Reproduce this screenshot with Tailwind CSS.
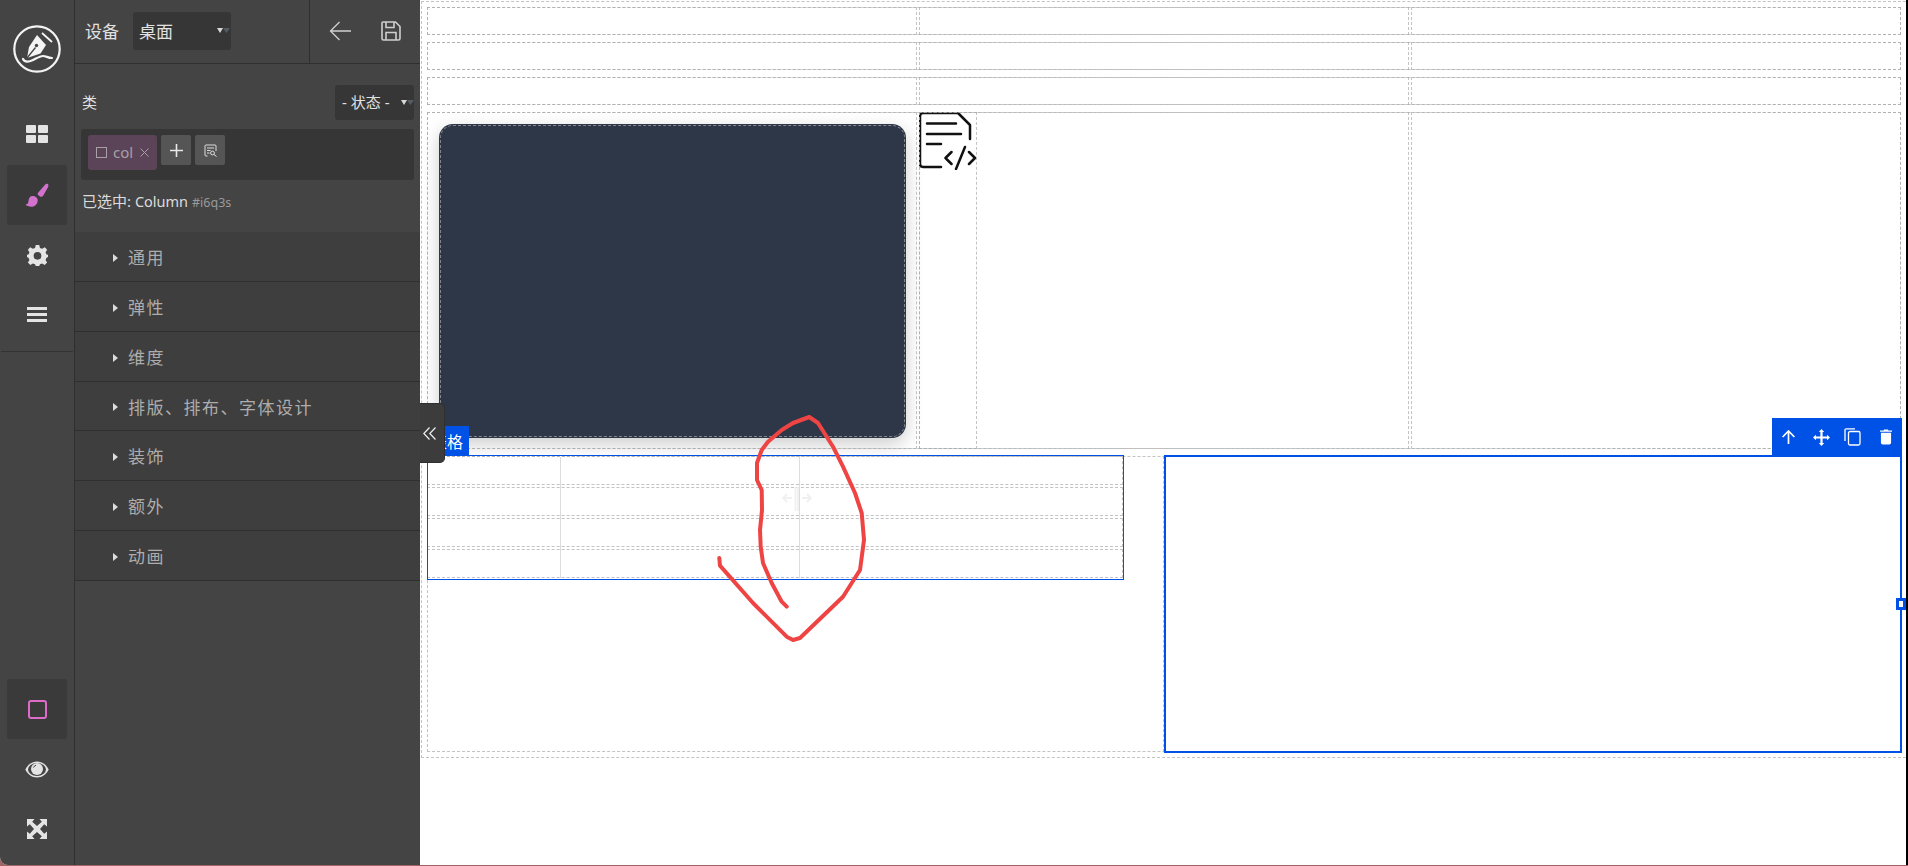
<!DOCTYPE html>
<html lang="zh">
<head>
<meta charset="utf-8">
<title>Editor</title>
<script src="https://cdn.jsdelivr.net/npm/@tailwindcss/browser@4"></script>
</head>
<body class="m-0 h-[866px] overflow-hidden bg-[#a06464] font-['Noto_Sans','Noto_Sans_CJK_SC',sans-serif]">
<div class="flex h-[865px] w-[1908px] overflow-hidden rounded-bl-lg bg-white">

  <!-- icon rail -->
  <aside class="flex w-[75px] shrink-0 flex-col border-r border-[#2f2f2f] bg-[#444444] text-[#e4e4e4]">
    <div class="flex h-[97px] items-center justify-center pt-[1px]">
      <svg class="h-[48px] w-[48px]" viewBox="0 0 48 48" fill="none">
        <circle cx="24" cy="24" r="22.7" stroke="#f4f4f4" stroke-width="2.2"/>
        <path d="M29 8 L39 17" stroke="#f4f4f4" stroke-width="1.8"/>
        <path d="M24 10 L33 20 L27.5 28.5 L14 33 L16 22 Z" fill="#f4f4f4"/>
        <path d="M14 33 L22.5 22.5" stroke="#444444" stroke-width="1.3"/>
        <circle cx="23.5" cy="20.5" r="1.7" fill="#444444"/>
        <path d="M10 34 C12 38 16 37 20 35 C24 33 27 31 30 31 C33 31 35 33 39 33" stroke="#f4f4f4" stroke-width="2.2" stroke-linecap="round"/>
      </svg>
    </div>
    <div class="flex h-[68px] items-center justify-center pt-[6px]">
      <svg class="h-[18px] w-[22px]" viewBox="0 0 22 18" fill="#e4e4e4"><rect width="10" height="8" rx="1"/><rect x="12" width="10" height="8" rx="1"/><rect y="10" width="10" height="8" rx="1"/><rect x="12" y="10" width="10" height="8" rx="1"/></svg>
    </div>
    <div class="mx-[7px] flex h-[60px] items-center justify-center rounded-[3px] bg-[#3a3a3a]">
      <svg class="h-[24px] w-[24px]" viewBox="0 0 24 24" fill="#d272cc"><path d="M22.5 .8 C23.6 1.4 23.6 3 23 4.2 L18 13 C17.4 14 16 14 15 13.4 L13.4 12.3 C12.6 11.7 12.4 10.6 13.1 9.8 L20 1.8 C20.8 .9 21.7 .4 22.5 .8 Z"/><path d="M7 13 C9.6 12.6 12 14 12.6 16.2 C13.2 19 11.6 22.4 8.4 23.4 C5.6 24.2 2.4 23.6 .4 21.6 C2.4 21.2 3.2 20.2 3.4 18.4 C3.6 15.6 4.8 13.4 7 13 Z"/></svg>
    </div>
    <div class="flex h-[60px] items-center justify-center">
      <svg class="h-[21px] w-[21px]" viewBox="0 0 24 24" fill="#e4e4e4" fill-rule="evenodd"><path d="M10 0 H14 L14.8 3.3 L17.4 4.4 L20.3 2.6 L23 5.4 L21.2 8.3 L22.3 10.8 L24 11.2 V13.8 L22.3 14.6 L21.2 17 L23 20 L20.2 22.8 L17.3 21 L14.8 22.1 L14 24 H10 L9.2 22.1 L6.7 21 L3.8 22.8 L1 20 L2.8 17 L1.7 14.6 L0 13.8 V11.2 L1.7 10.8 L2.8 8.3 L1 5.4 L3.7 2.6 L6.6 4.4 L9.2 3.3 Z M12 8 A4.4 4.4 0 1 0 12 16.8 A4.4 4.4 0 1 0 12 8 Z"/></svg>
    </div>
    <div class="flex h-[58px] items-center justify-center">
      <div class="flex w-[20px] flex-col gap-[3px]"><div class="h-[3px] bg-[#e4e4e4]"></div><div class="h-[3px] bg-[#e4e4e4]"></div><div class="h-[3px] bg-[#e4e4e4]"></div></div>
    </div>
    <div class="h-[8px]"></div>
    <div class="mx-[1px] h-px bg-[#333333]"></div>
    <div class="flex-1"></div>
    <div class="mx-[7px] flex h-[60px] items-center justify-center rounded-[3px] bg-[#3a3a3a]">
      <div class="h-[19px] w-[19px] rounded-[3px] border-2 border-[#dc6cc8]"></div>
    </div>
    <div class="flex h-[60px] items-center justify-center">
      <svg class="h-[17px] w-[24px]" viewBox="0 0 24 17"><path d="M12 .5 C6.6 .5 2.6 4 .3 8.5 C2.6 13 6.6 16.5 12 16.5 C17.4 16.5 21.4 13 23.7 8.5 C21.4 4 17.4 .5 12 .5 Z" fill="#e4e4e4"/><ellipse cx="12" cy="8.5" rx="9" ry="6.4" fill="#444444"/><circle cx="12" cy="8" r="6" fill="#e4e4e4"/><path d="M8.5 6.5 Q9.3 4.6 11 4.2" stroke="#444444" fill="none"/></svg>
    </div>
    <div class="flex h-[60px] items-center justify-center">
      <svg class="h-[20px] w-[20px]" viewBox="0 0 20 20" fill="#e4e4e4"><path d="M0 0 H7.5 L5.2 2.8 L10 7 L14.8 2.8 L12.5 0 H20 V7.5 L17.2 5.2 L13 10 L17.2 14.8 L20 12.5 V20 H12.5 L14.8 17.2 L10 13 L5.2 17.2 L7.5 20 H0 V12.5 L2.8 14.8 L7 10 L2.8 5.2 L0 7.5 Z"/></svg>
    </div>
    <div class="h-[6px]"></div>
  </aside>

  <!-- side panel -->
  <section class="flex w-[345px] shrink-0 flex-col bg-[#444444] text-[#e2e2e2]">
    <header class="flex h-[64px] shrink-0 border-b border-[#2f2f2f]">
      <div class="flex w-[234px] items-center pb-[1px] pl-[10px]">
        <span class="text-[17px] leading-none">设备</span>
        <div class="relative ml-[14px] flex h-[38px] w-[98px] items-center rounded-[3px] bg-[#363636] pl-[6px] text-[17px] leading-none">桌面
          <svg class="absolute right-[1px] top-[16px] h-[5px] w-[13px]" viewBox="0 0 13 5"><path d="M0 0 H6 L3 5 Z" fill="#d8d8d8"/><path d="M6 0 H13 L9.5 5 Z" fill="#555c66"/></svg>
        </div>
      </div>
      <div class="flex flex-1 items-center border-l border-[#2f2f2f] pb-[1px] pl-[19px]">
        <svg class="h-[20px] w-[23px]" viewBox="0 0 23 20" fill="none" stroke="#cfcfcf" stroke-width="1.3"><path d="M22 10 H1.5 M10.5 1 L1.5 10 L10.5 19"/></svg>
        <svg class="ml-[29px] h-[20px] w-[20px]" viewBox="0 0 20 20" fill="none" stroke="#cfcfcf" stroke-width="1.6"><path d="M2 1 H14.5 L19 5.5 V17.5 Q19 19 17.5 19 H2.5 Q1 19 1 17.5 V2 Q1 1 2 1 Z"/><path d="M5 1 V6.5 H13 V1 M5 19 V11.5 H15 V19"/></svg>
      </div>
    </header>

    <div class="h-[168px] shrink-0 px-[6px]">
      <div class="mt-[21px] flex h-[35px] items-center justify-between pl-[1px]">
        <span class="text-[15px] leading-none">类</span>
        <div class="relative flex h-[35px] w-[79px] items-center rounded-[3px] bg-[#363636] pl-[7px] text-[15px] leading-none">- 状态 -
          <svg class="absolute right-0 top-[15px] h-[5px] w-[13px]" viewBox="0 0 13 5"><path d="M0 0 H6 L3 5 Z" fill="#d8d8d8"/><path d="M6 0 H13 L9.5 5 Z" fill="#555c66"/></svg>
        </div>
      </div>
      <div class="mt-[9px] flex h-[51px] items-start gap-[4px] rounded-[3px] bg-[#363636] pl-[7px] pt-[6px]">
        <div class="flex h-[35px] w-[69px] items-center rounded-[3px] bg-[#5c4458] pl-[8px] leading-none text-[#a8a0a6]">
          <span class="h-[11px] w-[11px] border border-[#a8a0a6]"></span>
          <span class="ml-[6px] text-[15px]">col</span>
          <svg class="ml-[7px] h-[9px] w-[9px]" viewBox="0 0 9 9" stroke="#a8a0a6" fill="none"><path d="M.5 .5 L8.5 8.5 M8.5 .5 L.5 8.5"/></svg>
        </div>
        <div class="flex h-[30px] w-[30px] items-center justify-center rounded-[2px] bg-[#555555]">
          <svg class="h-[13px] w-[13px]" viewBox="0 0 13 13" stroke="#e8e8e8" stroke-width="1.6"><path d="M6.5 0 V13 M0 6.5 H13"/></svg>
        </div>
        <div class="flex h-[30px] w-[30px] items-center justify-center rounded-[2px] bg-[#555555]">
          <svg class="h-[13px] w-[13px]" viewBox="0 0 13 13" fill="none" stroke="#dedede" stroke-width="1"><path d="M3.5 12 H2 Q1 12 1 11 V2 Q1 1 2 1 H11 Q12 1 12 2 V7"/><path d="M3 4 H10 M3 6.5 H6.5 M3 9 H5.5"/><circle cx="8.5" cy="9" r="1.9"/><path d="M10 10.5 L12.5 12.5"/></svg>
        </div>
      </div>
      <p class="mt-[11px] pl-[1px] text-[15px] leading-[20px] text-[#dcdcdc]">已选中: <span class="text-[14.5px]">Column</span> <span class="text-[12.5px] text-[#9a9a9a]">#i6q3s</span></p>
    </div>

    <nav class="shrink-0 bg-[#3e3e3e] text-[17px] leading-none tracking-[1.5px] text-[#adadad]">
      <div class="flex h-[50px] items-center border-b border-[#2f2f2f] pl-[38px] pt-[2px]"><span class="mr-[10px] h-0 w-0 border-y-[4.5px] border-l-[5px] border-y-transparent border-l-[#dcdcdc]"></span>通用</div>
      <div class="flex h-[50px] items-center border-b border-[#2f2f2f] pl-[38px] pt-[2px]"><span class="mr-[10px] h-0 w-0 border-y-[4.5px] border-l-[5px] border-y-transparent border-l-[#dcdcdc]"></span>弹性</div>
      <div class="flex h-[50px] items-center border-b border-[#2f2f2f] pl-[38px] pt-[2px]"><span class="mr-[10px] h-0 w-0 border-y-[4.5px] border-l-[5px] border-y-transparent border-l-[#dcdcdc]"></span>维度</div>
      <div class="flex h-[49px] items-center border-b border-[#2f2f2f] pl-[38px] pt-[2px]"><span class="mr-[10px] h-0 w-0 border-y-[4.5px] border-l-[5px] border-y-transparent border-l-[#dcdcdc]"></span>排版、排布、字体设计</div>
      <div class="flex h-[50px] items-center border-b border-[#2f2f2f] pl-[38px] pt-[2px]"><span class="mr-[10px] h-0 w-0 border-y-[4.5px] border-l-[5px] border-y-transparent border-l-[#dcdcdc]"></span>装饰</div>
      <div class="flex h-[50px] items-center border-b border-[#2f2f2f] pl-[38px] pt-[2px]"><span class="mr-[10px] h-0 w-0 border-y-[4.5px] border-l-[5px] border-y-transparent border-l-[#dcdcdc]"></span>额外</div>
      <div class="flex h-[50px] items-center border-b border-[#2f2f2f] pl-[38px] pt-[2px]"><span class="mr-[10px] h-0 w-0 border-y-[4.5px] border-l-[5px] border-y-transparent border-l-[#dcdcdc]"></span>动画</div>
    </nav>
  </section>

  <!-- canvas -->
  <main class="relative w-[1486px] shrink-0 overflow-hidden bg-white">
    <div class="h-[759px] w-[1492px] pl-[6px] pt-[6px] outline outline-dashed -outline-offset-2 outline-[#aaaaaab3]">
      <div class="flex w-[1476px] flex-col gap-[5px]">
        <!-- three thin rows -->
        <div class="grid h-[30px] grid-cols-3 outline outline-dashed -outline-offset-2 outline-[#aaaaaab3]"><div class="outline outline-dashed -outline-offset-2 outline-[#aaaaaab3]"></div><div class="outline outline-dashed -outline-offset-2 outline-[#aaaaaab3]"></div><div class="outline outline-dashed -outline-offset-2 outline-[#aaaaaab3]"></div></div>
        <div class="grid h-[30px] grid-cols-3 outline outline-dashed -outline-offset-2 outline-[#aaaaaab3]"><div class="outline outline-dashed -outline-offset-2 outline-[#aaaaaab3]"></div><div class="outline outline-dashed -outline-offset-2 outline-[#aaaaaab3]"></div><div class="outline outline-dashed -outline-offset-2 outline-[#aaaaaab3]"></div></div>
        <div class="grid h-[30px] grid-cols-3 outline outline-dashed -outline-offset-2 outline-[#aaaaaab3]"><div class="outline outline-dashed -outline-offset-2 outline-[#aaaaaab3]"></div><div class="outline outline-dashed -outline-offset-2 outline-[#aaaaaab3]"></div><div class="outline outline-dashed -outline-offset-2 outline-[#aaaaaab3]"></div></div>
        <!-- hero row -->
        <div class="grid h-[339px] grid-cols-3 outline outline-dashed -outline-offset-2 outline-[#aaaaaab3]">
          <div class="pb-[12px] pl-[13px] pr-[12px] pt-[13px] outline outline-dashed -outline-offset-2 outline-[#aaaaaab3]">
            <div class="h-full rounded-[14px] bg-[#2d3748] shadow-[0_6px_18px_rgba(0,0,0,0.2)] outline outline-dashed -outline-offset-2 outline-[#aaaaaab3]"></div>
          </div>
          <div class="flex outline outline-dashed -outline-offset-2 outline-[#aaaaaab3]">
            <div class="h-full w-[60px] pl-[1px] pt-[1px] outline outline-dashed -outline-offset-2 outline-[#aaaaaab3]">
              <svg class="block h-[58px] w-[58px] overflow-hidden" viewBox="0 0 58 58" fill="none" stroke="#111111" stroke-width="2.5" stroke-linecap="round" stroke-linejoin="round">
                <path d="M22 55 H4 Q1 55 1 52 V4 Q1 1 4 1 H39 L51 13 V27"/>
                <path d="M8 11.5 H37 M8 22 H42 M8 32 H22"/>
                <path d="M32.5 40 L26.5 46 L32.5 52 M50 40 L56 46 L50 52 M46 35 L37 57"/>
              </svg>
            </div>
          </div>
          <div class="outline outline-dashed -outline-offset-2 outline-[#aaaaaab3]"></div>
        </div>
        <!-- lower row -->
        <div class="flex h-[298px] outline outline-dashed -outline-offset-2 outline-[#aaaaaab3]">
          <div class="flex w-[698px] shrink-0 flex-col self-start">
            <div class="h-[31px] outline outline-dashed -outline-offset-2 outline-[#aaaaaab3]"></div>
            <div class="h-[31px] outline outline-dashed -outline-offset-2 outline-[#aaaaaab3]"></div>
            <div class="h-[31px] outline outline-dashed -outline-offset-2 outline-[#aaaaaab3]"></div>
            <div class="h-[31px] outline outline-dashed -outline-offset-2 outline-[#aaaaaab3]"></div>
          </div>
          <div class="ml-[38px] flex-1 outline outline-dashed -outline-offset-2 outline-[#aaaaaab3]"></div>
        </div>
      </div>
    </div>

    <!-- selection overlays -->
    <div class="absolute left-[7px] top-[455px] h-[125px] w-[697px] border border-[#0052e6]"></div>
    <div class="absolute left-0 top-[426px] flex h-[30px] w-[49px] items-center justify-end bg-[#0052e6] pr-[6px] pt-[2px] text-[16px] leading-none text-white">表格</div>
    <div class="absolute left-[140px] top-[457px] h-[121px] w-px bg-[#dcdcdc]"></div>
    <div class="absolute left-[379px] top-[457px] h-[121px] w-px bg-[#dcdcdc]"></div>
    <svg class="absolute left-[362px] top-[486px] h-[26px] w-[30px]" viewBox="0 0 30 26" fill="none" stroke="#f0f0f0" stroke-width="1.8"><path d="M13.5 1 V25 M16 1 V25 M1 12 H10 M5 8 L1 12 L5 16 M20 12 H29 M25 8 L29 12 L25 16"/></svg>

    <div class="absolute left-[744px] top-[455px] h-[298px] w-[738px] border-2 border-[#0052e6]">
      <div class="absolute -right-[6px] top-[141px] h-[12px] w-[10px] border-[3px] border-[#0052e6] bg-white"></div>
    </div>
    <div class="absolute left-[1352px] top-[418px] flex h-[38px] w-[130px] items-center bg-[#0052e6] pl-[10px]">
      <svg class="h-[14px] w-[13px]" viewBox="0 0 13 14" fill="none" stroke="#ffffff" stroke-width="1.7"><path d="M6.5 14 V1.5 M.6 7 L6.5 1 L12.4 7"/></svg>
      <svg class="ml-[18px] h-[17px] w-[17px]" viewBox="0 0 17 17" fill="#ffffff"><path d="M8.5 0 L11.2 3 H9.6 V7.4 H14 V5.8 L17 8.5 L14 11.2 V9.6 H9.6 V14 H11.2 L8.5 17 L5.8 14 H7.4 V9.6 H3 V11.2 L0 8.5 L3 5.8 V7.4 H7.4 V3 H5.8 Z"/></svg>
      <svg class="ml-[14px] h-[18px] w-[17px]" viewBox="0 0 17 18" fill="none" stroke="#ffffff" stroke-width="1.3"><path d="M1 13 V2 Q1 .8 2.2 .8 H11"/><rect x="4.5" y="3.5" width="11.5" height="13.5" rx="1.5"/></svg>
      <svg class="ml-[19px] h-[16px] w-[12px]" viewBox="0 0 13 16" fill="#ffffff"><path d="M4.5 0 H8.5 L9.2 1 H13 V2.4 H0 V1 H3.8 Z"/><path d="M1 3.4 H12 V14 Q12 16 10 16 H3 Q1 16 1 14 Z"/></svg>
    </div>

    <!-- collapse toggle -->
    <button class="absolute left-0 top-[403px] flex h-[60px] w-[25px] items-center justify-center rounded-r-[5px] border border-l-0 border-[#2f2f2f] bg-[#3c3c3c] pr-[5px]">
      <svg class="h-[13px] w-[13px]" viewBox="0 0 13 13" fill="none" stroke="#f0f0f0" stroke-width="1.2"><path d="M6.5 .5 L.8 6.5 L6.5 12.5 M12.5 .5 L6.8 6.5 L12.5 12.5"/></svg>
    </button>

    <!-- freehand annotation -->
    <svg class="pointer-events-none absolute left-0 top-0 h-[865px] w-[1486px]" viewBox="420 0 1486 865" fill="none" stroke="#ef4444" stroke-width="4" stroke-linecap="round" stroke-linejoin="round">
      <path d="M786.7 606.7 L781.7 601.7 L771.7 583 L763 563 L760.7 546.7 L760 530 L762 510 L761.7 490 L757 480 L757 463 L761.7 450 L768 441.7 L781.7 430 L793 423 L809.3 417 L818 423 L833 446.7 L843 466.7 L855 493 L861.7 513 L864 540 L860 570 L843 596.7 L800 638 L793 640 L786.7 636.7 L753 603 L720 565.7 L719.3 558"/>
    </svg>
  </main>
  <div class="w-[2px] shrink-0 bg-black"></div>
</div>
</body>
</html>
